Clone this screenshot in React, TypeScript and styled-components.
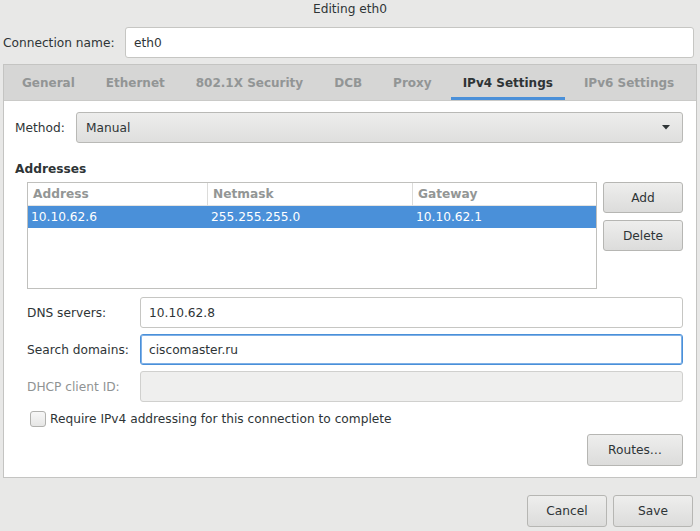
import React from "react";
import styled, { createGlobalStyle } from "styled-components";

const GlobalStyle = createGlobalStyle`
  html, body {
    margin: 0;
    padding: 0;
    background: #e8e8e7;
  }
  body {
    font-family: "DejaVu Sans", "Liberation Sans", sans-serif;
    font-size: 12.2px;
    color: #2e3436;
  }
`;

const Window = styled.div`
  width: 700px;
  height: 531px;
  display: flex;
  flex-direction: column;
  background: #e8e8e7;
  overflow: hidden;
`;
const TitleBar = styled.div`
  height: 18px;
  line-height: 18px;
  text-align: center;
  color: #2e3436;
`;
const ConnectionRow = styled.div`
  margin-top: 9px;
  display: flex;
  align-items: center;
  padding: 0 6px 0 3px;
`;
const RowLabel = styled.label<{ $width: number; $disabled?: boolean }>`
  flex: 0 0 ${(p) => p.$width}px;
  color: ${(p) => (p.$disabled ? "#8f9393" : "#2e3436")};
`;
const TextInput = styled.div<{ $focused?: boolean; $disabled?: boolean }>`
  flex: 1;
  height: 31px;
  box-sizing: border-box;
  display: flex;
  align-items: center;
  padding: 0 8px;
  border-radius: 3px;
  border: 1px solid
    ${(p) => (p.$focused ? "#4a90d9" : p.$disabled ? "#d0d0ce" : "#c6c6c3")};
  background: ${(p) => (p.$disabled ? "#efefee" : "#fff")};
  box-shadow: ${(p) => (p.$focused ? "inset 0 0 0 1px #7fb0e6" : "none")};
`;
const Notebook = styled.div`
  margin: 6px 3px 0 3px;
  border: 1px solid #c4c4c2;
  background: #fff;
  display: flex;
  flex-direction: column;
`;
const TabBar = styled.div`
  height: 35px;
  background: #d6d6d5;
  border-bottom: 1px solid #cacac8;
  display: flex;
  align-items: stretch;
  padding-left: 6px;
  gap: 7px;
`;
const Tab = styled.div<{ $active?: boolean }>`
  padding: 1px 12px 0 12px;
  display: flex;
  align-items: center;
  font-size: 12px;
  font-weight: bold;
  color: ${(p) => (p.$active ? "#2e3436" : "#929595")};
  box-shadow: ${(p) => (p.$active ? "inset 0 -3px 0 #4a90d9" : "none")};
`;
const Page = styled.div`
  padding: 11px 13px 11px 11px;
  display: flex;
  flex-direction: column;
`;
const MethodRow = styled.div`
  display: flex;
  align-items: center;
`;
const Combo = styled.div`
  flex: 1;
  height: 31px;
  box-sizing: border-box;
  border: 1px solid #b9b9b6;
  border-radius: 3px;
  background: linear-gradient(#ededec, #dfdfde);
  display: flex;
  align-items: center;
  justify-content: space-between;
  padding: 0 12px 0 9px;
`;
const SectionTitle = styled.div`
  margin-top: 19px;
  font-weight: bold;
  line-height: 15px;
`;
const AddressArea = styled.div`
  margin: 5px 0 0 12px;
  display: flex;
  gap: 6px;
  align-items: flex-start;
`;
const Table = styled.div`
  flex: 1;
  height: 107px;
  box-sizing: border-box;
  border: 1px solid #c0c0bd;
  background: #fff;
`;
const TableRow = styled.div<{ $header?: boolean; $selected?: boolean }>`
  display: grid;
  grid-template-columns: 180px 205px 1fr;
  height: ${(p) => (p.$header ? 23 : 22)}px;
  background: ${(p) => (p.$selected ? "#4a90d9" : "transparent")};
  color: ${(p) => (p.$selected ? "#fff" : p.$header ? "#939695" : "#2e3436")};
  font-weight: ${(p) => (p.$header ? "bold" : "normal")};
`;
const Cell = styled.div<{ $header?: boolean; $last?: boolean }>`
  display: flex;
  align-items: center;
  padding-left: ${(p) => (p.$header ? 5 : 3)}px;
  border-right: ${(p) => (p.$header && !p.$last ? "1px solid #dcdcda" : "none")};
  border-bottom: ${(p) => (p.$header ? "1px solid #e4e4e2" : "none")};
`;
const ButtonColumn = styled.div`
  display: flex;
  flex-direction: column;
  gap: 7px;
`;
const Button = styled.div<{ $width: number; $height?: number }>`
  width: ${(p) => p.$width}px;
  height: ${(p) => p.$height ?? 31}px;
  box-sizing: border-box;
  border: 1px solid #b6b6b3;
  border-radius: 3px;
  background: linear-gradient(#eeeeed, #dcdcdb);
  display: flex;
  align-items: center;
  justify-content: center;
  color: #2e3436;
`;
const FieldGroup = styled.div`
  margin: 8px 0 0 12px;
  display: flex;
  flex-direction: column;
  gap: 6px;
`;
const FieldRow = styled.div`
  display: flex;
  align-items: center;
`;
const CheckRow = styled.div`
  margin: 9px 0 0 15px;
  display: flex;
  align-items: center;
  gap: 4px;
  height: 16px;
`;
const CheckBox = styled.span`
  width: 16px;
  height: 16px;
  box-sizing: border-box;
  border: 1px solid #b1b1ae;
  border-radius: 3px;
  background: linear-gradient(#f7f7f7, #e6e6e5);
`;
const RoutesRow = styled.div`
  margin-top: 7px;
  display: flex;
  justify-content: flex-end;
`;
const DialogButtons = styled.div`
  margin-top: 17px;
  padding-right: 7px;
  display: flex;
  justify-content: flex-end;
  gap: 6px;
`;

const tabs = ["General", "Ethernet", "802.1X Security", "DCB", "Proxy", "IPv4 Settings", "IPv6 Settings"];

const App = () => {
  return (
    <Window>
      <GlobalStyle />
      <TitleBar>Editing eth0</TitleBar>
      <ConnectionRow>
        <RowLabel $width={122}>Connection name:</RowLabel>
        <TextInput>eth0</TextInput>
      </ConnectionRow>
      <Notebook>
        <TabBar>
          {tabs.map((t) => (
            <Tab key={t} $active={t === "IPv4 Settings"}>
              {t}
            </Tab>
          ))}
        </TabBar>
        <Page>
          <MethodRow>
            <RowLabel $width={61}>Method:</RowLabel>
            <Combo>
              <span>Manual</span>
              <svg width="8" height="5" viewBox="0 0 8 5">
                <path d="M0 0 L8 0 L4 4.5 Z" fill="#2e3436" />
              </svg>
            </Combo>
          </MethodRow>
          <SectionTitle>Addresses</SectionTitle>
          <AddressArea>
            <Table>
              <TableRow $header>
                <Cell $header>Address</Cell>
                <Cell $header>Netmask</Cell>
                <Cell $header $last>Gateway</Cell>
              </TableRow>
              <TableRow $selected>
                <Cell>10.10.62.6</Cell>
                <Cell>255.255.255.0</Cell>
                <Cell>10.10.62.1</Cell>
              </TableRow>
            </Table>
            <ButtonColumn>
              <Button $width={80}>Add</Button>
              <Button $width={80}>Delete</Button>
            </ButtonColumn>
          </AddressArea>
          <FieldGroup>
            <FieldRow>
              <RowLabel $width={113}>DNS servers:</RowLabel>
              <TextInput>10.10.62.8</TextInput>
            </FieldRow>
            <FieldRow>
              <RowLabel $width={113}>Search domains:</RowLabel>
              <TextInput $focused>ciscomaster.ru</TextInput>
            </FieldRow>
            <FieldRow>
              <RowLabel $width={113} $disabled>
                DHCP client ID:
              </RowLabel>
              <TextInput $disabled />
            </FieldRow>
          </FieldGroup>
          <CheckRow>
            <CheckBox />
            <span>Require IPv4 addressing for this connection to complete</span>
          </CheckRow>
          <RoutesRow>
            <Button $width={96} $height={32}>
              Routes…
            </Button>
          </RoutesRow>
        </Page>
      </Notebook>
      <DialogButtons>
        <Button $width={80} $height={32}>
          Cancel
        </Button>
        <Button $width={80} $height={32}>
          Save
        </Button>
      </DialogButtons>
    </Window>
  );
};

export default App;
